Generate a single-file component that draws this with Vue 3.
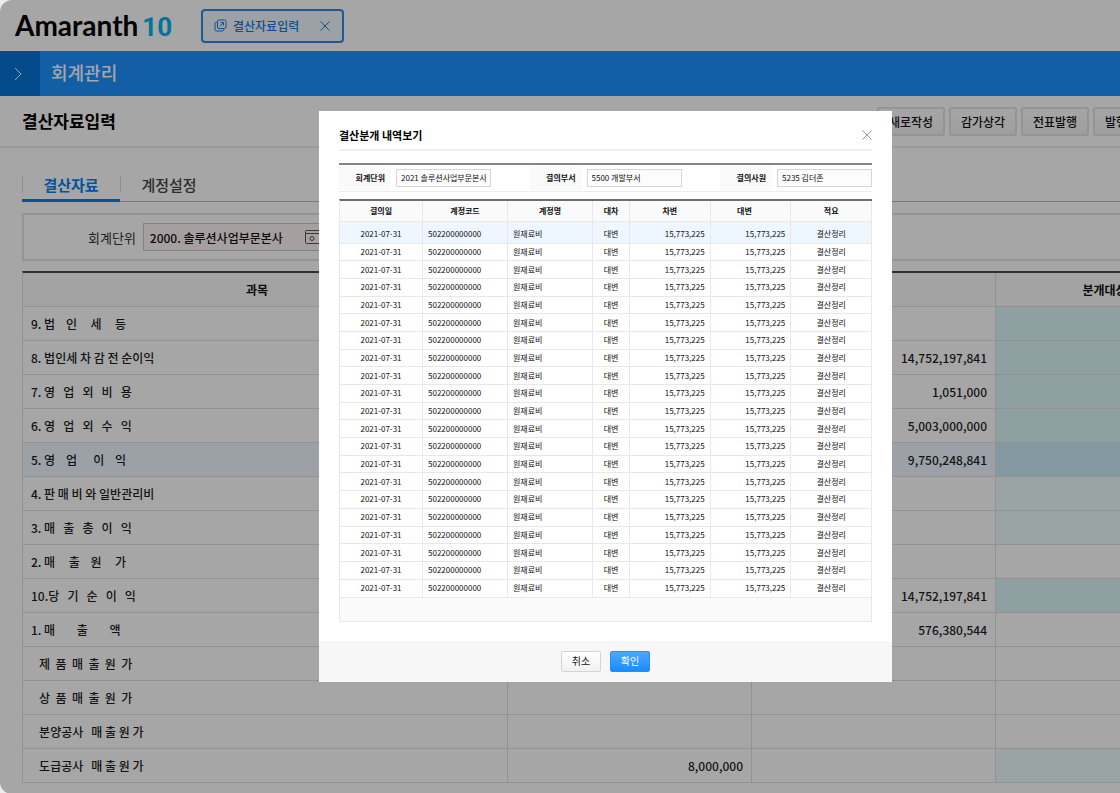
<script setup>
import { ref } from 'vue'

const unit = ref('2000. 솔루션사업부문본사')

const actions = ['새로작성', '감가상각', '전표발행', '발행취소']

// target: background tone of the last column
const accounts = [
  { name: '9. 법    인     세     등', credit: '', target: 'strong' },
  { name: '8. 법인세 차 감 전 순이익', credit: '14,752,197,841', target: 'strong' },
  { name: '7. 영   업   외   비   용', credit: '1,051,000', target: 'strong' },
  { name: '6. 영   업   외   수   익', credit: '5,003,000,000', target: 'strong' },
  { name: '5. 영    업      이    익', credit: '9,750,248,841', target: 'picked', selected: true },
  { name: '4. 판 매 비 와 일반관리비', credit: '', target: 'soft' },
  { name: '3. 매   출   총   이   익', credit: '', target: 'soft' },
  { name: '2. 매     출    원     가', credit: '', target: '' },
  { name: '10.당   기   순   이   익', credit: '14,752,197,841', target: 'strong' },
  { name: '1. 매        출        액', credit: '576,380,544', target: '' },
  { name: '   제  품  매  출  원  가', credit: '', target: '' },
  { name: '   상  품  매  출  원  가', credit: '', target: '' },
  { name: '   분양공사   매 출 원 가', credit: '', target: '' },
  { name: '   도급공사   매 출 원 가', debit: '8,000,000', credit: '', target: 'soft' },
]

const filters = ref([
  { id: 'unit', label: '회계단위', value: '2021 솔루션사업부문본사' },
  { id: 'dept', label: '결의부서', value: '5500 개발부서' },
  { id: 'writer', label: '결의사원', value: '5235 김더존' },
])

const entries = Array.from({ length: 21 }, (_, i) => ({
  id: i,
  date: '2021-07-31',
  code: '502200000000',
  account: '원재료비',
  side: '대변',
  debit: '15,773,225',
  credit: '15,773,225',
  note: '결산정리',
}))
</script>

<template>
  <div class="window">
    <header class="top">
      <div class="logo">Amaranth<span class="logo__num">10</span></div>
      <div class="doc-tab">
        <svg class="doc-tab__icon" viewBox="0 0 13 13" aria-hidden="true">
          <rect x="3.5" y="1" width="8.5" height="8.5" rx="1.5" />
          <path d="M3.5 3.2H2.5A1.5 1.5 0 0 0 1 4.7v5.8A1.5 1.5 0 0 0 2.5 12h5.8a1.5 1.5 0 0 0 1.5-1.5v-1M6 7.2l3.3-3.4M6.6 3.6h2.9v2.9" />
        </svg>
        <span>결산자료입력</span>
        <button class="doc-tab__close" type="button" aria-label="닫기">
          <svg viewBox="0 0 10 10"><path d="M0.5 0.5l9 9M9.5 0.5l-9 9" /></svg>
        </button>
      </div>
    </header>

    <div class="module">
      <button class="module__toggle" type="button" aria-label="메뉴 열기">
        <svg viewBox="0 0 8 14"><path d="M1 1l6 6-6 6" /></svg>
      </button>
      <span class="module__name">회계관리</span>
    </div>

    <main class="workspace">
      <div class="page-head">
        <h1 class="page-head__title">결산자료입력</h1>
        <div class="page-head__actions">
          <button v-for="action in actions" :key="action" class="btn" type="button">{{ action }}</button>
        </div>
      </div>

      <div class="content">
        <nav class="tabs">
          <a class="tabs__item tabs__item--active" href="#">결산자료</a>
          <a class="tabs__item" href="#">계정설정</a>
        </nav>

        <div class="search">
          <label class="search__label" for="search-unit">회계단위</label>
          <div class="search__box">
            <input id="search-unit" v-model="unit" class="search__input" type="text">
            <svg class="search__icon" viewBox="0 0 16 14" aria-hidden="true">
              <rect x="0.5" y="0.5" width="15" height="13" rx="1" />
              <path d="M0.5 3.5h15" />
              <circle cx="7" cy="8.5" r="2" />
            </svg>
          </div>
        </div>

        <table class="ledger">
          <colgroup>
            <col class="ledger__col-name">
            <col class="ledger__col-amount">
            <col class="ledger__col-amount">
            <col>
          </colgroup>
          <thead>
            <tr>
              <th>과목</th>
              <th></th>
              <th></th>
              <th>분개대상</th>
            </tr>
          </thead>
          <tbody>
            <tr v-for="row in accounts" :key="row.name" :class="{ 'ledger__row--selected': row.selected }">
              <td class="ledger__name">{{ row.name }}</td>
              <td class="ledger__amount">{{ row.debit }}</td>
              <td class="ledger__amount">{{ row.credit }}</td>
              <td :class="row.target ? `ledger__target--${row.target}` : ''"></td>
            </tr>
          </tbody>
        </table>
      </div>
    </main>

    <!-- Closing journal detail dialog -->
    <div class="overlay">
      <section class="dialog" role="dialog" aria-labelledby="dialog-title">
        <div class="dialog__body">
          <div class="dialog__head">
            <h2 id="dialog-title" class="dialog__title">결산분개 내역보기</h2>
            <button class="dialog__close" type="button" aria-label="닫기">
              <svg viewBox="0 0 10 10"><path d="M0.5 0.5l9 9M9.5 0.5l-9 9" /></svg>
            </button>
          </div>

          <div class="filters">
            <div v-for="filter in filters" :key="filter.id" class="filters__field">
              <label class="filters__label" :for="`filter-${filter.id}`">{{ filter.label }}</label>
              <input :id="`filter-${filter.id}`" v-model="filter.value" class="filters__input" type="text">
            </div>
          </div>

          <table class="entries">
            <colgroup>
              <col class="entries__col-date">
              <col class="entries__col-code">
              <col class="entries__col-code">
              <col class="entries__col-side">
              <col>
              <col>
              <col>
            </colgroup>
            <thead>
              <tr>
                <th>결의일</th>
                <th>계정코드</th>
                <th>계정명</th>
                <th>대차</th>
                <th>차변</th>
                <th class="entries__credit-head">대변</th>
                <th>적요</th>
              </tr>
            </thead>
            <tbody>
              <tr v-for="entry in entries" :key="entry.id">
                <td>{{ entry.date }}</td>
                <td class="entries__text">{{ entry.code }}</td>
                <td class="entries__text">{{ entry.account }}</td>
                <td>{{ entry.side }}</td>
                <td class="entries__amount">{{ entry.debit }}</td>
                <td class="entries__amount">{{ entry.credit }}</td>
                <td>{{ entry.note }}</td>
              </tr>
            </tbody>
          </table>
          <div class="entries-foot"></div>
        </div>

        <footer class="dialog__foot">
          <button class="dialog__btn" type="button">취소</button>
          <button class="dialog__btn dialog__btn--primary" type="button">확인</button>
        </footer>
      </section>
    </div>
  </div>
</template>

<style>
body {
  background: #ececec;
}
</style>

<style scoped>
.window {
  position: relative;
  min-height: 100vh;
  overflow: hidden;
  border-radius: 12px 0 0 12px;
  background: #fff;
  color: #111;
  font-family: "Noto Sans CJK KR", sans-serif;
  font-size: 12px;
}
.window *,
.window *::before {
  box-sizing: border-box;
}
button,
input {
  font-family: inherit;
  color: inherit;
  margin: 0;
}
svg {
  display: block;
  fill: none;
  stroke: currentColor;
}

.top {
  display: flex;
  align-items: center;
  gap: 31px;
  height: 51px;
  padding-left: 15px;
}
.logo {
  width: 155px;
  font-family: Lato, sans-serif;
  font-size: 28px;
  font-weight: 700;
  line-height: 32px;
  white-space: nowrap;
  color: #000;
}
.logo__num {
  margin-left: 4px;
  font-family: Roboto, sans-serif;
  font-size: 26px;
  font-weight: 700;
  color: #00b4f0;
}
.doc-tab {
  display: flex;
  align-items: center;
  width: 143px;
  height: 34px;
  padding: 0 12px 0 11px;
  border: 2px solid #2f8ae4;
  border-radius: 4px;
  background: #f0f7ff;
  color: #2577cf;
  font-weight: 500;
}
.doc-tab__icon {
  width: 13px;
  height: 13px;
  margin-right: 6px;
}
.doc-tab__close {
  margin-left: auto;
  padding: 0;
  border: 0;
  background: none;
}
.doc-tab__close svg {
  width: 10px;
  height: 10px;
}

.module {
  display: flex;
  align-items: center;
  height: 45px;
  background: #1c92ff;
  color: #fff;
}
.module__toggle {
  display: flex;
  align-items: center;
  justify-content: center;
  width: 40px;
  height: 45px;
  padding: 0 4px 0 0;
  border: 0;
  background: #0873d6;
}
.module__toggle svg {
  width: 8px;
  height: 14px;
}
.module__name {
  margin-left: 11px;
  padding-bottom: 3px;
  font-size: 18px;
  font-weight: 500;
  line-height: 26px;
}

.workspace {
  min-width: 1214px;
}
.page-head {
  display: flex;
  align-items: center;
  justify-content: space-between;
  height: 52px;
  padding: 0 53px 0 22px;
  border-bottom: 2px solid #ececec;
}
.page-head__title {
  margin: 0;
  font-size: 17px;
  font-weight: 700;
  line-height: 26px;
  color: #000;
}
.page-head__actions {
  display: flex;
  gap: 4px;
}
.btn {
  width: 68px;
  height: 29px;
  padding: 0;
  border: 2px solid #e4e4e4;
  border-radius: 3px;
  background: linear-gradient(#fff, #f4f4f4);
  font-size: 12px;
  font-weight: 500;
}

.content {
  padding: 26px 0 11px 22px;
}
.tabs {
  display: flex;
  height: 28px;
  border-bottom: 1px solid #bbb;
}
.tabs__item {
  position: relative;
  width: 98px;
  height: 28px;
  font-size: 15px;
  font-weight: 500;
  line-height: 21px;
  text-align: center;
  text-decoration: none;
  color: #444;
}
.tabs__item::before {
  content: "";
  position: absolute;
  top: 1px;
  left: 0;
  width: 1px;
  height: 18px;
  background: #dcdcdc;
}
.tabs__item--active {
  border-bottom: 3px solid #0d7ef0;
  font-weight: 700;
  color: #0d7ef0;
}

.search {
  display: flex;
  align-items: center;
  height: 48px;
  margin: 11px 0 10px;
  padding-left: 64px;
  border: 2px solid #e4e4e4;
}
.search__label {
  margin-right: 7px;
  font-size: 13px;
  color: #333;
}
.search__box {
  display: flex;
  align-items: center;
  width: 196px;
  height: 28px;
  border: 1px solid #d0c8c8;
  background: #fff4f4;
}
.search__input {
  flex: 1;
  min-width: 0;
  padding: 0 6px;
  border: 0;
  outline: 0;
  background: none;
  font-size: 12px;
  font-weight: 500;
}
.search__icon {
  width: 16px;
  height: 14px;
  margin-right: 17px;
  color: #555;
}

.ledger {
  width: 100%;
  border-collapse: separate;
  border-spacing: 0;
  border-top: 2px solid #4a4a4a;
  border-left: 1px solid #e0e0e0;
  table-layout: fixed;
}
.ledger__col-name {
  width: 485px;
}
.ledger__col-amount {
  width: 244px;
}
.ledger th,
.ledger td {
  height: 34px;
  padding: 0 8px;
  border-right: 1px solid #e0e0e0;
  border-bottom: 1px solid #e0e0e0;
  line-height: 18px;
}
.ledger th {
  padding: 0;
  background: #fafafa;
  font-weight: 700;
}
.ledger th:first-child {
  padding-right: 16px;
}
.ledger td {
  font-weight: 500;
  color: #1c1c24;
}
.ledger__name {
  white-space: pre;
}
.ledger__amount {
  text-align: right;
}
.ledger__row--selected td {
  background: #eef7ff;
}
.ledger td.ledger__target--strong {
  background: #dcf6fb;
}
.ledger td.ledger__target--soft {
  background: #eefcfe;
}
.ledger td.ledger__target--picked {
  background: #caeaf6;
}

.overlay {
  position: absolute;
  inset: 0;
  display: flex;
  align-items: center;
  justify-content: center;
  padding: 0 0 2px 91px;
  background: rgba(0, 0, 0, 0.35);
}
.dialog {
  width: 573px;
  background: #fff;
  font-size: 8px;
}
.dialog__body {
  padding: 0 20px 19px;
}
.dialog__head {
  display: flex;
  align-items: center;
  justify-content: space-between;
  height: 40px;
  padding-top: 11px;
  border-bottom: 2px solid #efefef;
}
.dialog__title {
  margin: 0;
  font-size: 11px;
  font-weight: 700;
  line-height: 16px;
  color: #000;
}
.dialog__close {
  padding: 0;
  border: 0;
  background: none;
  color: #999;
}
.dialog__close svg {
  width: 10px;
  height: 10px;
}

.filters {
  display: flex;
  align-items: center;
  justify-content: space-between;
  height: 29px;
  margin: 12px 0 7px;
  border-top: 2px solid #858585;
  border-bottom: 1px solid #ececec;
}
.filters__field {
  display: flex;
  align-items: center;
  gap: 5px;
}
.filters__label {
  width: 52px;
  padding-right: 6px;
  background: #fafafa;
  font-weight: 700;
  line-height: 24px;
  text-align: right;
}
.filters__input {
  width: 95px;
  height: 18px;
  padding: 0 4px;
  border: 1px solid #d6d6d6;
  border-radius: 0;
  outline: 0;
  background: #fcfcfc;
  font-size: 8px;
}

.entries {
  width: 100%;
  height: 399px;
  border-collapse: separate;
  border-spacing: 0;
  border-top: 2px solid #6e6e6e;
  border-left: 1px solid #e8e8e8;
  table-layout: fixed;
}
.entries__col-date {
  width: 83px;
}
.entries__col-code {
  width: 85px;
}
.entries__col-side {
  width: 37px;
}
.entries th,
.entries td {
  padding: 0;
  border-right: 1px solid #e8e8e8;
  border-bottom: 1px solid #e8e8e8;
  line-height: 12px;
  text-align: center;
}
.entries th {
  height: 21px;
  background: #fafafa;
  font-weight: 700;
}
.entries th.entries__credit-head {
  padding-right: 12px;
}
.entries tbody tr:first-child td {
  height: 22px;
  padding-top: 3px;
  background: #eef7ff;
}
.entries td.entries__text {
  padding-left: 5px;
  text-align: left;
}
.entries td.entries__amount {
  padding-right: 5px;
  text-align: right;
}
.entries-foot {
  height: 24px;
  border: 1px solid #e8e8e8;
  border-top: 0;
  background: #fafafa;
}

.dialog__foot {
  display: flex;
  align-items: center;
  justify-content: center;
  gap: 9px;
  height: 41px;
  background: #f7f7f7;
}
.dialog__btn {
  width: 40px;
  height: 21px;
  padding: 0;
  border: 1px solid #d4d4d4;
  border-radius: 2px;
  background: linear-gradient(#fff, #f1f1f1);
  font-size: 10px;
  line-height: 18px;
}
.dialog__btn--primary {
  border-color: #2a8ff5;
  background: linear-gradient(#4aa8ff, #1a8cff);
  color: #fff;
}
</style>
